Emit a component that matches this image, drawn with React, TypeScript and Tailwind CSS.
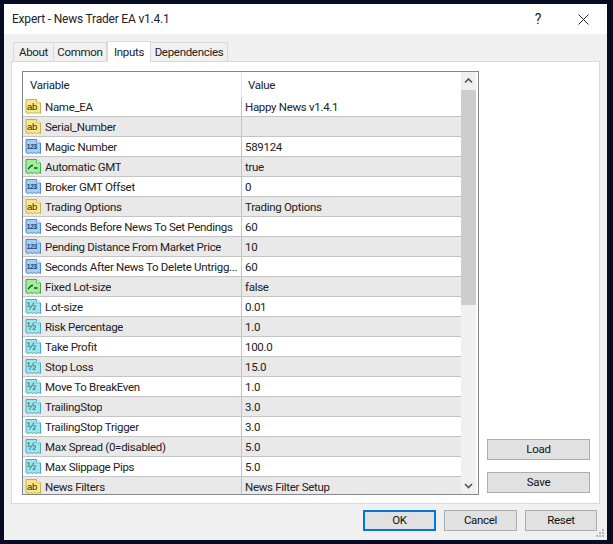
const ROWS: [string, string, string][] = [
  ["ab", "Name_EA", "Happy News v1.4.1"],
  ["ab", "Serial_Number", ""],
  ["123", "Magic Number", "589124"],
  ["bool", "Automatic GMT", "true"],
  ["123", "Broker GMT Offset", "0"],
  ["ab", "Trading Options", "Trading Options"],
  ["123", "Seconds Before News To Set Pendings", "60"],
  ["123", "Pending Distance From Market Price", "10"],
  ["123", "Seconds After News To Delete Untrigg...", "60"],
  ["bool", "Fixed Lot-size", "false"],
  ["half", "Lot-size", "0.01"],
  ["half", "Risk Percentage", "1.0"],
  ["half", "Take Profit", "100.0"],
  ["half", "Stop Loss", "15.0"],
  ["half", "Move To BreakEven", "1.0"],
  ["half", "TrailingStop", "3.0"],
  ["half", "TrailingStop Trigger", "3.0"],
  ["half", "Max Spread (0=disabled)", "5.0"],
  ["half", "Max Slippage Pips", "5.0"],
  ["ab", "News Filters", "News Filter Setup"],
];

function TypeIcon({ kind }: { kind: string }) {
  const c =
    kind === "ab"
      ? { fill: "#f7e88e", stroke: "#cdb040" }
      : kind === "123"
        ? { fill: "#a6cef3", stroke: "#4f8ccb" }
        : kind === "bool"
          ? { fill: "#a2ec9c", stroke: "#45ab4d" }
          : { fill: "#a2e4ee", stroke: "#44aebd" };
  return (
    <svg width="17" height="17" viewBox="0 0 17 17" className="shrink-0">
      <path
        d="M1 1.5H11.5L15.5 5V15.5L13.5 14.5L11.5 15.5L9.5 14.5L7.5 15.5L5.5 14.5L3.5 15.5L1 14.5Z"
        fill={c.fill}
        stroke={c.stroke}
        strokeWidth="1"
      />
      <path d="M11.5 1.5V5H15.5" fill="#fff" stroke={c.stroke} strokeWidth="0.8" />
      {kind === "ab" && (
        <text x="2" y="11.5" fontSize="9.5" fontFamily="Liberation Sans" fill="#2f2a10">
          ab
        </text>
      )}
      {kind === "123" && (
        <text x="1.8" y="11" fontSize="6.6" fontWeight="700" fontFamily="Liberation Sans" fill="#123f74">
          123
        </text>
      )}
      {kind === "half" && (
        <text x="2" y="12" fontSize="11" fontFamily="Liberation Sans" fill="#14606e">
          ½
        </text>
      )}
      {kind === "bool" && (
        <path d="M3 11L6.5 7.5H8M9 10H12.5" fill="none" stroke="#0f5318" strokeWidth="1.3" />
      )}
    </svg>
  );
}

function Btn({ label, cls }: { label: string; cls: string }) {
  return (
    <div className={`flex h-[21px] items-center justify-center border bg-[#e1e1e1] pt-px text-[#111] ${cls}`}>
      {label}
    </div>
  );
}

export default function App() {
  return (
    <div
      className="h-[544px] w-[613px] overflow-hidden bg-[#070b24] pb-[4px] pl-[4px] pr-[6px] pt-[4px] text-[11.5px] tracking-[-0.3px] text-[#222]"
      style={{ fontFamily: 'Roboto, "Liberation Sans", sans-serif' }}
    >
      <div className="relative flex h-full w-full flex-col bg-[#f0f0f0]">
        <div className="flex h-[30px] shrink-0 items-center justify-between bg-white pl-[8px] pr-[18px]">
          <span className="text-[12px] tracking-[-0.2px]">Expert - News Trader EA v1.4.1</span>
          <div className="flex items-center gap-[37px]">
            <span className="text-[14px]">?</span>
            <svg width="11" height="11" viewBox="0 0 11 11">
              <path d="M0.5 0.5L10.5 10.5M10.5 0.5L0.5 10.5" stroke="#222" strokeWidth="1" />
            </svg>
          </div>
        </div>

        <div className="mx-[7px] flex h-[27px] shrink-0 items-end pl-[2px]">
          <div className="flex h-[19px] w-[41px] items-center justify-center border border-b-0 border-[#d9d9d9] pt-[2px]">
            About
          </div>
          <div className="flex h-[19px] w-[53px] items-center justify-center border border-b-0 border-l-0 border-[#d9d9d9] pt-[2px]">
            Common
          </div>
          <div className="relative z-10 -mb-px flex h-[21px] w-[44px] items-start justify-center border border-b-0 border-[#d9d9d9] bg-white pt-[2px]">
            Inputs
          </div>
          <div className="flex h-[19px] w-[77px] items-center justify-center border border-b-0 border-l-0 border-[#d9d9d9] pt-[2px]">
            Dependencies
          </div>
        </div>

        <div className="mx-[7px] flex h-[443px] shrink-0 border border-[#d9d9d9] bg-white pb-[9px] pl-[10px] pr-[9px] pt-[9px]">
          <div className="flex h-[424px] w-[457px] shrink-0 border border-[#828790]">
            <div className="flex min-w-0 flex-1 flex-col overflow-hidden">
              <div className="flex h-[25px] shrink-0 items-center">
                <div className="flex h-full w-[219px] items-center border-r border-[#e5e5e5] pl-[7px] pt-[3px]">Variable</div>
                <div className="pl-[6px] pt-[3px]">Value</div>
              </div>
              {ROWS.map(([kind, name, value], i) => (
                <div
                  key={name}
                  className={`flex h-[20px] shrink-0 items-center border-b border-[#c4c4c4] ${i % 2 === 1 ? "bg-[#e9e9e9]" : "bg-white"}`}
                >
                  <div className="flex h-full w-[219px] shrink-0 items-center gap-[3px] border-r border-[#c4c4c4] pl-[2px]">
                    <TypeIcon kind={kind} />
                    <span className="truncate pt-[2px]">{name}</span>
                  </div>
                  <div className="pl-[3px] pt-[2px]">{value}</div>
                </div>
              ))}
            </div>
            <div className="flex w-[17px] shrink-0 bg-white">
              <div className="flex w-[15px] flex-col items-center bg-[#f0f0f0]">
                <svg width="15" height="18" viewBox="0 0 15 18" className="shrink-0">
                  <path d="M4 10.5L7.5 7L11 10.5" fill="none" stroke="#555" strokeWidth="1.6" />
                </svg>
                <div className="h-[215px] w-[15px] shrink-0 bg-[#cdcdcd]" />
                <div className="flex-1" />
                <svg width="15" height="17" viewBox="0 0 15 17" className="shrink-0">
                  <path d="M4 7L7.5 10.5L11 7" fill="none" stroke="#555" strokeWidth="1.6" />
                </svg>
              </div>
            </div>
          </div>
          <div className="ml-[8px] flex flex-1 flex-col justify-end gap-[12px] pb-[1px]">
            <Btn label="Load" cls="border-[#adadad]" />
            <Btn label="Save" cls="border-[#adadad]" />
          </div>
        </div>

        <div className="flex flex-1 items-start justify-end gap-[8px] pr-[10px] pt-[6px]">
          <Btn label="OK" cls="w-[73px] border-2 border-[#0078d7]" />
          <Btn label="Cancel" cls="w-[73px] border-[#adadad]" />
          <Btn label="Reset" cls="w-[72px] border-[#adadad]" />
        </div>

        <svg width="9" height="9" viewBox="0 0 9 9" className="absolute bottom-[2px] right-[2px]">
          <g fill="#b8b8b8">
            <rect x="6" y="0" width="2" height="2" />
            <rect x="3" y="3" width="2" height="2" />
            <rect x="6" y="3" width="2" height="2" />
            <rect x="0" y="6" width="2" height="2" />
            <rect x="3" y="6" width="2" height="2" />
            <rect x="6" y="6" width="2" height="2" />
          </g>
        </svg>
      </div>
    </div>
  );
}
